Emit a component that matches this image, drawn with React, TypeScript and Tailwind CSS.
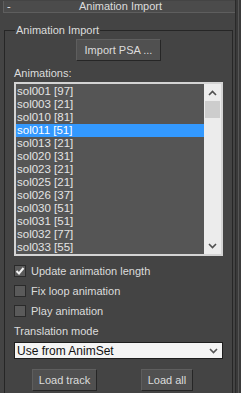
import { useState } from 'react';

const animations = [
  'sol001 [97]',
  'sol003 [21]',
  'sol010 [81]',
  'sol011 [51]',
  'sol013 [21]',
  'sol020 [31]',
  'sol023 [21]',
  'sol025 [21]',
  'sol026 [37]',
  'sol030 [51]',
  'sol031 [51]',
  'sol032 [77]',
  'sol033 [55]',
];

function Check({ checked, label }: { checked: boolean; label: string }) {
  return (
    <div className="flex items-center h-[20px] gap-[5px]">
      <span className="w-[12px] h-[12px] border border-[#2a2a2a] bg-[#5a5a5a] flex items-center justify-center">
        {checked && (
          <svg width="10" height="10" viewBox="0 0 10 10">
            <path d="M1.5 5 L4 7.5 L8.5 2" stroke="#f2f2f2" strokeWidth="2" fill="none" />
          </svg>
        )}
      </span>
      <span>{label}</span>
    </div>
  );
}

function Btn({ children, w }: { children: string; w: string }) {
  return (
    <button
      className={`${w} shrink-0 h-[22px] bg-[#505050] border border-t-[#5e5e5e] border-l-[#5e5e5e] border-r-[#262626] border-b-[#262626] text-[#dcdcdc] leading-none`}
    >
      {children}
    </button>
  );
}

export default function App() {
  const [selected, setSelected] = useState(3);

  return (
    <div
      className="w-[241px] h-[393px] bg-[#444444] overflow-hidden flex text-[11px] text-[#dcdcdc]"
      style={{ fontFamily: '"Liberation Sans", Arial, sans-serif' }}
    >
      <div className="w-[235px] flex flex-col">
        {/* Rollout header */}
        <div className="ml-[3px] mt-[1px] h-[14px] bg-[#4b4b4b] border-l border-b border-[#5e5e5e] flex items-center">
          <span className="w-[10px] pl-[3px] text-[#e6e6e6] leading-none">-</span>
          <span className="flex-1 text-center leading-none pr-[8px]">Animation Import</span>
        </div>

        {/* Group box */}
        <fieldset className="ml-[4px] mr-[2px] mt-[11px] border border-[#262626] px-[9px] pb-2 min-h-[400px]">
          <legend className="ml-[1px] px-[1px] leading-[12px]">Animation Import</legend>

          <div className="flex justify-center mt-[3px]">
            <Btn w="w-[85px]">Import PSA ...</Btn>
          </div>

          <div className="mt-[5px] leading-[14px]">Animations:</div>

          <div className="mt-[2px] w-[209px] h-[174px] border-2 border-[#d4d4d4] bg-[#555555] flex">
            <div className="flex-1 pt-[1px]">
              {animations.map((a, i) => (
                <div
                  key={a}
                  onClick={() => setSelected(i)}
                  className={`h-[13px] leading-[13px] pl-[1px] text-[11.5px] ${
                    i === selected ? 'bg-[#3399ff] text-white' : 'text-[#e4e4e4]'
                  }`}
                >
                  {a}
                </div>
              ))}
            </div>
            <div className="w-[17px] bg-[#ececec] flex flex-col">
              <div className="h-[17px] flex items-center justify-center">
                <svg width="9" height="6" viewBox="0 0 9 6">
                  <path d="M1 5 L4.5 1.5 L8 5" stroke="#505050" strokeWidth="1.6" fill="none" />
                </svg>
              </div>
              <div className="mx-[1px] h-[17px] bg-[#cdcdcd]" />
              <div className="flex-1" />
              <div className="h-[17px] flex items-center justify-center">
                <svg width="9" height="6" viewBox="0 0 9 6">
                  <path d="M1 1 L4.5 4.5 L8 1" stroke="#505050" strokeWidth="1.6" fill="none" />
                </svg>
              </div>
            </div>
          </div>

          <div className="mt-[5px]">
            <Check checked label="Update animation length" />
            <Check checked={false} label="Fix loop animation" />
            <Check checked={false} label="Play animation" />
          </div>

          <div className="mt-[3px] leading-[14px]">Translation mode</div>

          <div className="mt-[4px] w-[209px] h-[17px] bg-[#f4f4f4] border border-[#1e1e1e] flex items-center text-[#111] text-[12px] pl-[2px] pr-[4px]">
            <span className="flex-1 leading-none">Use from AnimSet</span>
            <svg width="9" height="6" viewBox="0 0 9 6">
              <path d="M1 1 L4.5 4.5 L8 1" stroke="#555" strokeWidth="1.6" fill="none" />
            </svg>
          </div>

          <div className="mt-[10px] flex">
            <div className="ml-[18px]">
              <Btn w="w-[65px]">Load track</Btn>
            </div>
            <div className="ml-[44px]">
              <Btn w="w-[52px]">Load all</Btn>
            </div>
          </div>
        </fieldset>
      </div>

      {/* Right panel scrollbar strip */}
      <div className="w-[6px] bg-[#3a3a3a] border-l border-[#2a2a2a] flex">
        <div className="ml-[2px] w-[1px] bg-[#555555]" />
      </div>
    </div>
  );
}
